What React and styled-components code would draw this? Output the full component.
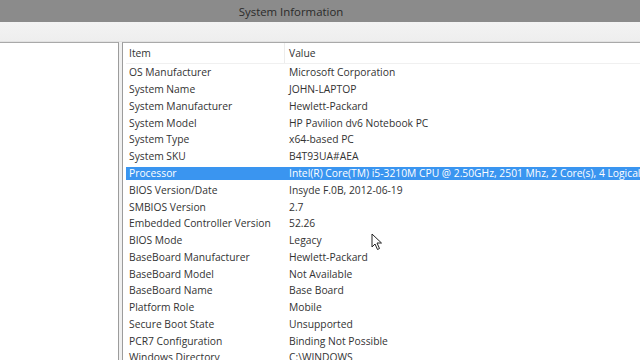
import React from "react";
import styled, { createGlobalStyle } from "styled-components";

const Global = createGlobalStyle`
  html, body { margin: 0; padding: 0; background: #f0f0f0; overflow: hidden; }
  body { font-family: "Open Sans", "Noto Sans", sans-serif; }
`;

const Window = styled.div`
  width: 640px;
  height: 360px;
  display: flex;
  flex-direction: column;
  background: #f0f0f0;
  position: relative;
  overflow: hidden;
`;

const TitleBar = styled.div`
  height: 22px;
  flex: none;
  background: #8b8b8b;
  color: #2a2a2a;
  font-size: 11.4px;
  display: flex;
  align-items: center;
  justify-content: center;
  padding-right: 58px;
  box-sizing: border-box;
`;

const MenuBar = styled.div`
  height: 19px;
  flex: none;
  background: linear-gradient(#f3f3f3, #eeeeee);
  border-bottom: 1px solid #e2e2e2;
`;

const Body = styled.div`
  flex: 1;
  display: flex;
  gap: 3px;
  min-height: 0;
`;

const TreePane = styled.div`
  width: 118px;
  flex: none;
  background: #ffffff;
  border-top: 1px solid #a9a9a9;
  border-right: 1px solid #9c9c9c;
`;

const ListPane = styled.div`
  flex: 1;
  background: #ffffff;
  border-top: 1px solid #a9a9a9;
  border-left: 1px solid #9c9c9c;
  display: flex;
  flex-direction: column;
  padding-left: 3px;
  min-width: 0;
  overflow: hidden;
`;

const HeaderRow = styled.div`
  height: 20px;
  flex: none;
  display: grid;
  grid-template-columns: 158px 1fr;
  align-items: center;
  border-bottom: 1px solid #f0f0f0;
  font-size: 10.3px;
  color: #333;
`;

const HeaderCell = styled.div`
  padding-left: ${(p) => (p.$first ? "3px" : "4px")};
  height: 100%;
  display: flex;
  align-items: center;
  border-left: ${(p) => (p.$first ? "none" : "1px solid #ececec")};
  box-sizing: border-box;
`;

const Row = styled.div`
  height: 16.78px;
  flex: none;
  display: grid;
  grid-template-columns: 158px 1fr;
  align-items: center;
  font-size: 10.3px;
  white-space: nowrap;
  color: ${(p) => (p.$selected ? "#ffffff" : "#333333")};
  background: ${(p) =>
    p.$selected
      ? "linear-gradient(transparent 2px, #3a95f0 2px, #3a95f0 14.8px, transparent 14.8px)"
      : "transparent"};
`;

const Cell = styled.div`
  padding-left: ${(p) => (p.$first ? "3px" : "5px")};
  overflow: hidden;
`;

const Cursor = styled.svg`
  position: absolute;
  left: 371px;
  top: 233px;
`;

const rows = [
  ["OS Manufacturer", "Microsoft Corporation"],
  ["System Name", "JOHN-LAPTOP"],
  ["System Manufacturer", "Hewlett-Packard"],
  ["System Model", "HP Pavilion dv6 Notebook PC"],
  ["System Type", "x64-based PC"],
  ["System SKU", "B4T93UA#AEA"],
  ["Processor", "Intel(R) Core(TM) i5-3210M CPU @ 2.50GHz, 2501 Mhz, 2 Core(s), 4 Logical Processor(s)", true],
  ["BIOS Version/Date", "Insyde F.0B, 2012-06-19"],
  ["SMBIOS Version", "2.7"],
  ["Embedded Controller Version", "52.26"],
  ["BIOS Mode", "Legacy"],
  ["BaseBoard Manufacturer", "Hewlett-Packard"],
  ["BaseBoard Model", "Not Available"],
  ["BaseBoard Name", "Base Board"],
  ["Platform Role", "Mobile"],
  ["Secure Boot State", "Unsupported"],
  ["PCR7 Configuration", "Binding Not Possible"],
  ["Windows Directory", "C:\\WINDOWS"],
];

export default function App() {
  return (
    <Window>
      <Global />
      <TitleBar>System Information</TitleBar>
      <MenuBar />
      <Body>
        <TreePane />
        <ListPane>
          <HeaderRow>
            <HeaderCell $first>Item</HeaderCell>
            <HeaderCell>Value</HeaderCell>
          </HeaderRow>
          {rows.map(([k, v, sel]) => (
            <Row key={k} $selected={sel}>
              <Cell $first>{k}</Cell>
              <Cell>{v}</Cell>
            </Row>
          ))}
        </ListPane>
      </Body>
      <Cursor width="12" height="18" viewBox="0 0 12 18">
        <path d="M1 1 L1 14 L4 11 L6.5 16.5 L8.5 15.5 L6 10 L10.5 10 Z" fill="#fff" stroke="#222" strokeWidth="1" strokeLinejoin="round" />
      </Cursor>
    </Window>
  );
}
